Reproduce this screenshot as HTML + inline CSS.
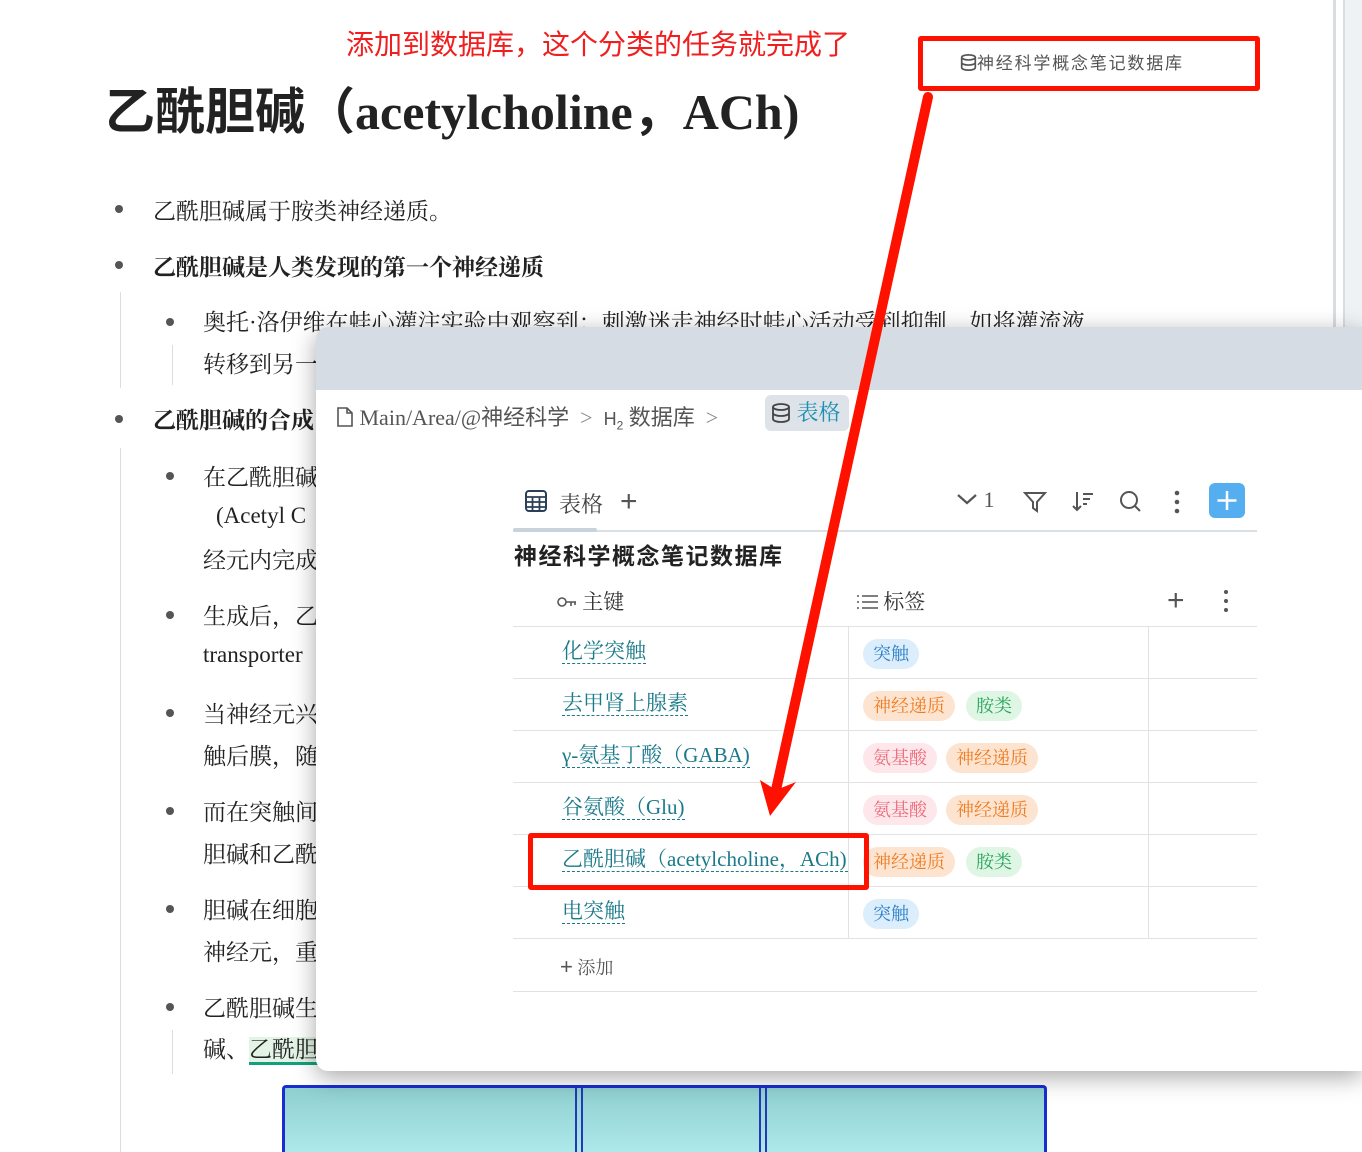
<!DOCTYPE html>
<html><head><meta charset="utf-8"><style>
*{margin:0;padding:0;box-sizing:border-box}
html,body{width:1362px;height:1152px;overflow:hidden}
body{background:#fff;position:relative;font-family:"Liberation Serif","Noto Serif CJK SC","Noto Sans CJK SC",serif;color:#222}
.abs{position:absolute;white-space:nowrap}
.t{font-size:23px}
.dot{position:absolute;width:8px;height:8px;border-radius:50%;background:#555}
.vl{position:absolute;width:1px;background:#ddd}
.pop{position:absolute;left:316px;top:327px;width:1046px;height:744px;background:#fff;border-radius:12px 0 0 12px;box-shadow:0 6px 24px rgba(0,0,0,.35);overflow:hidden}
.hd{height:63px;background:#d5dce3}
.row{position:absolute;left:197px;width:744px;height:52px;border-bottom:1px solid #e2e2e2}
.nm{position:absolute;left:49px;top:12px;font-size:21px;color:#1a7a8a;border-bottom:1.5px dashed #1a7a8a;line-height:24px}
.tg{position:absolute;top:12px;height:30px;line-height:30px;border-radius:15px;padding:0 10px;font-size:18px}
.b{background:#dcedfb;color:#2a7fc8}.o{background:#fde4d0;color:#f07c22}.g{background:#dff6e4;color:#26a35a}.p{background:#fde7ea;color:#ec6c7c}
</style></head><body>
<div class="abs" style="left:346px;top:23px;font-size:28px;color:#f01e1e;font-family:'Noto Sans CJK SC',sans-serif">添加到数据库，这个分类的任务就完成了</div>
<div class="abs" style="left:105px;top:72px;font-size:50px;font-weight:bold;font-family:'Liberation Serif','Noto Sans CJK SC',serif">乙酰胆碱（acetylcholine，ACh)</div>
<div style="position:absolute;left:1333px;top:0;width:3px;height:330px;background:#d8dde2"></div>
<div style="position:absolute;left:1343px;top:0;width:19px;height:330px;background:#eff2f5;border-left:2px solid #d8dde2"></div>
<div class="dot" style="left:115px;top:205px"></div><div class="abs t" style="left:153px;top:193px">乙酰胆碱属于胺类神经递质。</div>
<div class="dot" style="left:115px;top:261px"></div><div class="abs t" style="left:153px;top:249px;font-weight:bold">乙酰胆碱是人类发现的第一个神经递质</div>
<div class="vl" style="left:120px;top:292px;height:96px"></div>
<div class="dot" style="left:166px;top:318px"></div><div class="abs t" style="left:203px;top:304px">奥托·洛伊维在蛙心灌注实验中观察到：刺激迷走神经时蛙心活动受到抑制，如将灌流液</div>
<div class="vl" style="left:172px;top:345px;height:40px"></div>
<div class="abs t" style="left:203px;top:346px">转移到另一</div>
<div class="dot" style="left:115px;top:415px"></div><div class="abs t" style="left:153px;top:402px;font-weight:bold">乙酰胆碱的合成</div>
<div class="vl" style="left:120px;top:448px;height:704px"></div>
<div class="dot" style="left:166px;top:472px"></div><div class="abs t" style="left:203px;top:459px">在乙酰胆碱</div>
<div class="abs t" style="left:216px;top:503px">(Acetyl C</div>
<div class="abs t" style="left:203px;top:542px">经元内完成</div>
<div class="dot" style="left:166px;top:611px"></div><div class="abs t" style="left:203px;top:598px">生成后，乙</div>
<div class="abs t" style="left:203px;top:642px">transporter</div>
<div class="dot" style="left:166px;top:709px"></div><div class="abs t" style="left:203px;top:696px">当神经元兴</div>
<div class="abs t" style="left:203px;top:738px">触后膜，随</div>
<div class="dot" style="left:166px;top:807px"></div><div class="abs t" style="left:203px;top:794px">而在突触间</div>
<div class="abs t" style="left:203px;top:836px">胆碱和乙酰</div>
<div class="dot" style="left:166px;top:905px"></div><div class="abs t" style="left:203px;top:892px">胆碱在细胞</div>
<div class="abs t" style="left:203px;top:934px">神经元，重</div>
<div class="dot" style="left:166px;top:1003px"></div><div class="abs t" style="left:203px;top:990px">乙酰胆碱生</div>
<div class="abs t" style="left:203px;top:1031px">碱、<span style="background:#e3f4e6;border-bottom:3px solid #12a07a">乙酰胆</span></div>
<div class="vl" style="left:172px;top:1030px;height:44px"></div>
<div style="position:absolute;left:282px;top:1085px;width:765px;height:67px;border:3px solid #1a2ed0;border-bottom:none;border-radius:4px 4px 0 0;background:linear-gradient(#8fcfd0,#aee8ea);overflow:hidden">
<div style="position:absolute;left:290px;top:0;width:8px;height:70px;border-left:2px solid #2438b8;border-right:2px solid #2438b8"></div>
<div style="position:absolute;left:474px;top:0;width:8px;height:70px;border-left:2px solid #2438b8;border-right:2px solid #2438b8"></div>
</div>

<div class="pop">
<div class="hd"></div>
<div class="abs" style="left:20px;top:73px;font-size:22px;color:#555;font-family:'Liberation Serif','Noto Sans CJK SC',serif">
<svg width="18" height="20" viewBox="0 0 18 20" style="vertical-align:-2px"><path d="M2 1h9l5 5v13H2z M11 1v5h5" fill="none" stroke="#555" stroke-width="1.6"/></svg> Main/Area/@神经科学 <span style="color:#888">&nbsp;&gt;&nbsp;</span> <span style="font-family:'Liberation Sans',sans-serif;font-size:18px">H<sub style="font-size:12px">2</sub></span> 数据库 <span style="color:#888">&nbsp;&gt;&nbsp;</span></div>
<div class="abs" style="left:449px;top:68px;height:36px;width:84px;background:#dde3e8;border-radius:6px;font-size:22px;color:#1e8fb3;line-height:36px;padding-left:6px">
<svg width="20" height="20" viewBox="0 0 20 20" style="vertical-align:-3px"><ellipse cx="10" cy="4" rx="8" ry="3" fill="none" stroke="#444" stroke-width="1.8"/><path d="M2 4v12c0 1.7 3.6 3 8 3s8-1.3 8-3V4M2 10c0 1.7 3.6 3 8 3s8-1.3 8-3" fill="none" stroke="#444" stroke-width="1.8"/></svg> 表格</div>
<svg class="abs" style="left:209px;top:163px" width="22" height="22" viewBox="0 0 22 22"><rect x="1" y="1" width="20" height="20" rx="3" fill="none" stroke="#2c3e58" stroke-width="2"/><path d="M1 7h20M1 12h20M1 17h20M7.5 7v14M14.5 7v14" stroke="#2c3e58" stroke-width="1.8"/></svg>
<div class="abs" style="left:243px;top:161px;font-size:22px;color:#444">表格</div>
<div class="abs" style="left:304px;top:158px;font-size:30px;color:#555;font-family:'Liberation Sans'">+</div>
<div style="position:absolute;left:197px;top:203px;width:744px;height:2px;background:#d9dfe5"></div>
<div style="position:absolute;left:197px;top:201px;width:84px;height:4px;background:#c9d3dc;border-radius:2px"></div>
<div class="abs" style="left:640px;top:160px;font-size:22px;color:#555">
<svg width="22" height="16" viewBox="0 0 22 16"><path d="M2 4l9 8 9-8" fill="none" stroke="#555" stroke-width="2.2"/></svg> 1</div>
<svg class="abs" style="left:707px;top:164px" width="24" height="22" viewBox="0 0 24 22"><path d="M2 2h20l-8 9v9l-4-3v-6z" fill="none" stroke="#555" stroke-width="2"/></svg>
<svg class="abs" style="left:755px;top:163px" width="24" height="22" viewBox="0 0 24 22"><path d="M6 2v18M2 16l4 4 4-4M12 4h10M12 9h7M12 14h4" fill="none" stroke="#555" stroke-width="2"/></svg>
<svg class="abs" style="left:803px;top:163px" width="24" height="24" viewBox="0 0 24 24"><circle cx="10" cy="10" r="8" fill="none" stroke="#555" stroke-width="2"/><path d="M16 16l5 5" stroke="#555" stroke-width="2"/></svg>
<svg class="abs" style="left:857px;top:163px" width="8" height="24" viewBox="0 0 8 24"><circle cx="4" cy="3" r="2.3" fill="#555"/><circle cx="4" cy="12" r="2.3" fill="#555"/><circle cx="4" cy="21" r="2.3" fill="#555"/></svg>
<div class="abs" style="left:893px;top:156px;width:36px;height:35px;background:#55aef0;border-radius:6px"><svg width="36" height="35"><path d="M18 8v19M8.5 17.5h19" stroke="#fff" stroke-width="2.5"/></svg></div>
<div class="abs" style="left:198px;top:210px;font-size:23px;font-weight:bold;font-family:'Noto Sans CJK SC',sans-serif;color:#222;letter-spacing:1.5px">神经科学概念笔记数据库</div>
<div class="abs" style="left:241px;top:259px;font-size:21px;color:#333"><svg width="20" height="12" viewBox="0 0 20 12" style="vertical-align:1px"><circle cx="5" cy="6" r="4" fill="none" stroke="#555" stroke-width="1.6"/><path d="M9 6h10M14 6v4M18 6v3" stroke="#555" stroke-width="1.6" fill="none"/></svg> 主键</div>
<div class="abs" style="left:540px;top:259px;font-size:21px;color:#333"><svg width="22" height="16" viewBox="0 0 22 16" style="vertical-align:-1px"><path d="M6 2h16M6 8h16M6 14h16" stroke="#555" stroke-width="1.6"/><path d="M1 2h2M1 8h2M1 14h2" stroke="#555" stroke-width="1.6"/></svg> 标签</div>
<div class="abs" style="left:851px;top:257px;font-size:30px;color:#555;font-family:'Liberation Sans'">+</div>
<svg class="abs" style="left:906px;top:262px" width="8" height="24" viewBox="0 0 8 24"><circle cx="4" cy="3" r="2" fill="#555"/><circle cx="4" cy="12" r="2" fill="#555"/><circle cx="4" cy="21" r="2" fill="#555"/></svg>
<div style="position:absolute;left:197px;top:299px;width:744px;height:1px;background:#e2e2e2"></div>
<div style="position:absolute;left:532px;top:300px;width:1px;height:312px;background:#e2e2e2"></div>
<div style="position:absolute;left:832px;top:300px;width:1px;height:312px;background:#e2e2e2"></div>
<div class="row" style="top:300px"><span class="nm">化学突触</span><span class="tg b" style="left:350px">突触</span></div>
<div class="row" style="top:352px"><span class="nm">去甲肾上腺素</span><span class="tg o" style="left:350px">神经递质</span><span class="tg g" style="left:453px">胺类</span></div>
<div class="row" style="top:404px"><span class="nm">γ-氨基丁酸（GABA)</span><span class="tg p" style="left:350px">氨基酸</span><span class="tg o" style="left:433px">神经递质</span></div>
<div class="row" style="top:456px"><span class="nm">谷氨酸（Glu)</span><span class="tg p" style="left:350px">氨基酸</span><span class="tg o" style="left:433px">神经递质</span></div>
<div class="row" style="top:508px"><span class="nm" style="width:286px;overflow:hidden">乙酰胆碱（acetylcholine，ACh)</span><span class="tg o" style="left:350px">神经递质</span><span class="tg g" style="left:453px">胺类</span></div>
<div class="row" style="top:560px"><span class="nm">电突触</span><span class="tg b" style="left:350px">突触</span></div>
<div class="abs" style="left:244px;top:627px;font-size:18px;color:#555"><span style="font-size:22px;font-family:'Liberation Sans'">+</span> 添加</div>
<div style="position:absolute;left:197px;top:664px;width:744px;height:1px;background:#e2e2e2"></div>
</div>

<div style="position:absolute;left:918px;top:36px;width:342px;height:55px;border:5px solid #ff1100;border-radius:3px"></div>
<div class="abs" style="left:960px;top:49px;font-size:17px;color:#555;font-family:'Noto Sans CJK SC',sans-serif;letter-spacing:1.8px"><svg width="17" height="17" viewBox="0 0 20 20" style="vertical-align:-2px"><ellipse cx="10" cy="4" rx="8" ry="3" fill="none" stroke="#555" stroke-width="2"/><path d="M2 4v12c0 1.7 3.6 3 8 3s8-1.3 8-3V4M2 10c0 1.7 3.6 3 8 3s8-1.3 8-3" fill="none" stroke="#555" stroke-width="2"/></svg>神经科学概念笔记数据库</div>
<div style="position:absolute;left:528px;top:833px;width:341px;height:57px;border:5px solid #ff1100;border-radius:3px"></div>
<svg style="position:absolute;left:0;top:0" width="1362" height="1152"><path d="M928 97L776 790" stroke="#ff1100" stroke-width="10" stroke-linecap="round"/><path d="M760 780L770 816L796 782L776 790Z" fill="#ff1100"/></svg>
</body></html>
